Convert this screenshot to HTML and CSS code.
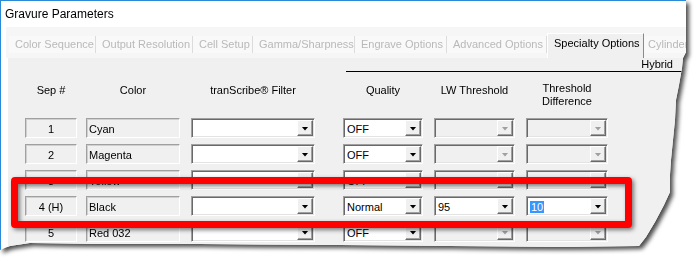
FILE: index.html
```html
<!DOCTYPE html>
<html lang="en">
<head>
    <meta charset="UTF-8">
    <title>Gravure Parameters</title>
    <link rel="stylesheet" href="styles.css">
</head>
<body>
    <div class="shot">
        <div class="janela">
            <div class="titulo">Gravure Parameters</div>
            <div class="abas">
                <div class="aba a1">Color Sequence</div>
                <div class="aba a2">Output Resolution</div>
                <div class="aba a3">Cell Setup</div>
                <div class="aba a4">Gamma/Sharpness</div>
                <div class="aba a5">Engrave Options</div>
                <div class="aba a6">Advanced Options</div>
                <div class="aba ativa">Specialty Options</div>
                <div class="aba ultima">Cylinder</div>
            </div>
            <div class="painel">
                <div class="hybrid">Hybrid</div>
                <div class="linha"></div>
                <div class="tabela">
                    <div class="fila cabeca">
                        <div class="c-sep um">Sep #</div>
                        <div class="c-cor um">Color</div>
                        <div class="c-filtro um">tranScribe® Filter</div>
                        <div class="c-q um">Quality</div>
                        <div class="c-lw um">LW Threshold</div>
                        <div class="c-dif">Threshold<br>Difference</div>
                    </div>

                    <div class="fila">
                        <div class="c-sep caixa centro">1</div>
                        <div class="c-cor caixa">Cyan</div>
                        <div class="c-filtro combo"><span class="valor"></span><span class="botao"><i></i></span></div>
                        <div class="c-q combo"><span class="valor">OFF</span><span class="botao"><i></i></span></div>
                        <div class="c-lw combo off"><span class="valor"></span><span class="botao"><i></i></span></div>
                        <div class="c-dif combo off"><span class="valor"></span><span class="botao"><i></i></span></div>
                    </div>
                    <div class="fila">
                        <div class="c-sep caixa centro">2</div>
                        <div class="c-cor caixa">Magenta</div>
                        <div class="c-filtro combo"><span class="valor"></span><span class="botao"><i></i></span></div>
                        <div class="c-q combo"><span class="valor">OFF</span><span class="botao"><i></i></span></div>
                        <div class="c-lw combo off"><span class="valor"></span><span class="botao"><i></i></span></div>
                        <div class="c-dif combo off"><span class="valor"></span><span class="botao"><i></i></span></div>
                    </div>
                    <div class="fila">
                        <div class="c-sep caixa centro">3</div>
                        <div class="c-cor caixa">Yellow</div>
                        <div class="c-filtro combo"><span class="valor"></span><span class="botao"><i></i></span></div>
                        <div class="c-q combo"><span class="valor">OFF</span><span class="botao"><i></i></span></div>
                        <div class="c-lw combo off"><span class="valor"></span><span class="botao"><i></i></span></div>
                        <div class="c-dif combo off"><span class="valor"></span><span class="botao"><i></i></span></div>
                    </div>
                    <div class="fila">
                        <div class="c-sep caixa centro">4 (H)</div>
                        <div class="c-cor caixa">Black</div>
                        <div class="c-filtro combo"><span class="valor"></span><span class="botao"><i></i></span></div>
                        <div class="c-q combo"><span class="valor">Normal</span><span class="botao"><i></i></span></div>
                        <div class="c-lw combo"><span class="valor">95</span><span class="botao"><i></i></span></div>
                        <div class="c-dif combo"><span class="valor"><b class="sel">10</b></span><span class="botao"><i></i></span></div>
                    </div>
                    <div class="fila">
                        <div class="c-sep caixa centro">5</div>
                        <div class="c-cor caixa">Red 032</div>
                        <div class="c-filtro combo"><span class="valor"></span><span class="botao"><i></i></span></div>
                        <div class="c-q combo"><span class="valor">OFF</span><span class="botao"><i></i></span></div>
                        <div class="c-lw combo off"><span class="valor"></span><span class="botao"><i></i></span></div>
                        <div class="c-dif combo off"><span class="valor"></span><span class="botao"><i></i></span></div>
                    </div>
                </div>
            </div>
        </div>
    </div>
    <div class="destaque"></div>
</body>
</html>
```

FILE: styles.css
```css
body {
    margin: 0;
    background-color: #fff;
    font-family: "Liberation Sans", Arial, sans-serif;
    font-size: 11px;
    color: #000;
}
.shot {
    width: 694px;
    height: 263px;
    filter: drop-shadow(3px 3px 2px rgba(0, 0, 0, 0.7));
}
.janela {
    width: 694px;
    height: 254px;
    box-sizing: border-box;
    background-color: #fff;
    border-top: 1px solid #2b8ad8;
    border-left: 1px solid #2b8ad8;
    clip-path: polygon(0 0, 686px 0, 686px 52px, 683px 58px, 682px 68px, 679px 85px, 676px 100px, 675px 120px, 673px 140px, 671px 160px, 670px 175px, 670px 192px, 664px 205px, 655px 222px, 646px 237px, 639px 246px, 560px 247px, 450px 246px, 340px 245px, 200px 244px, 100px 244px, 30px 243px, 10px 246px, 0 250px);
}
.titulo {
    height: 26px;
    line-height: 26px;
    padding-left: 4px;
    font-size: 12px;
}
.abas {
    display: flex;
    align-items: flex-end;
    height: 31px;
    margin-left: 5px;
    padding-left: 3px;
    background-color: #f6f6f6;
}
.aba {
    height: 17px;
    line-height: 17px;
    margin-bottom: 5px;
    padding-left: 6px;
    box-sizing: border-box;
    border-right: 1px solid #dcdcdc;
    background-color: #f9f9f9;
    color: #b9b9b9;
    white-space: nowrap;
    overflow: hidden;
}
.a1 { width: 87px; }
.a2 { width: 97px; }
.a3 { width: 60px; }
.a4 { width: 102px; }
.a5 { width: 92px; }
.a6 { width: 100px; }
.aba.ativa {
    width: 97px;
    height: 25px;
    margin-bottom: 0;
    padding-left: 6px;
    padding-top: 1px;
    background-color: #f0f0f0;
    border-top: 1px solid #fff;
    border-left: 1px solid #fff;
    border-right: 1px solid #8a8a8a;
    color: #000;
}
.aba.ultima {
    flex: 1;
    border-right: none;
    padding-left: 4px;
}
.painel {
    margin-left: 7px;
    height: 200px;
    background-color: #f0f0f0;
}
.hybrid {
    height: 12px;
    line-height: 12px;
    text-align: right;
    padding-right: 21px;
}
.linha {
    height: 1px;
    margin-top: 1px;
    margin-left: 338px;
    background-color: #000;
}
.tabela {
    padding-left: 17px;
    margin-top: 10px;
}
.fila {
    display: flex;
    height: 20px;
    margin-top: 6px;
}
.fila.cabeca {
    height: 36px;
    margin-top: 0;
    align-items: flex-start;
    line-height: 13px;
    text-align: center;
}
.cabeca .um {
    padding-top: 2px;
}
.c-sep { width: 52px; }
.c-cor { width: 94px; margin-left: 9px; }
.c-filtro { width: 124px; margin-left: 11px; }
.c-q { width: 80px; margin-left: 28px; }
.c-lw { width: 81px; margin-left: 11px; }
.c-dif { width: 82px; margin-left: 11px; }
.fila.cabeca + .fila {
    margin-top: 0;
}
.caixa {
    box-sizing: border-box;
    height: 20px;
    padding-left: 2px;
    padding-top: 1px;
    line-height: 18px;
    border: 1px solid;
    border-color: #a0a0a0 #fff #fff #a0a0a0;
    box-shadow: 1px 1px 0 #d0d0d0 inset;
    white-space: nowrap;
    overflow: hidden;
}
.caixa.centro {
    padding-left: 0;
    text-align: center;
}
.combo {
    position: relative;
    box-sizing: border-box;
    height: 20px;
    border: 1px solid;
    border-color: #a0a0a0 #fff #fff #a0a0a0;
    box-shadow: 1px 1px 0 #696969 inset, -1px -1px 0 #e3e3e3 inset;
    background-color: #fff;
}
.combo .valor {
    display: block;
    padding: 2px 0 0 3px;
    line-height: 16px;
}
.combo .sel {
    font-weight: normal;
    background-color: #3399ff;
    color: #fff;
    padding: 0 1px;
}
.botao {
    position: absolute;
    top: 1px;
    right: 1px;
    width: 16px;
    height: 16px;
    box-sizing: border-box;
    background-color: #f0f0f0;
    border: 1px solid;
    border-color: #fff #696969 #696969 #fff;
    box-shadow: -1px -1px 0 #a0a0a0 inset;
    display: flex;
    align-items: center;
    justify-content: center;
}
.botao i {
    display: block;
    width: 7px;
    height: 4px;
    margin-top: 1px;
    background-color: #000;
    clip-path: polygon(0 0, 100% 0, 50% 100%);
}
.combo.off {
    background-color: #f0f0f0;
}
.combo.off .botao i {
    background-color: #a0a0a0;
}
.destaque {
    position: absolute;
    left: 11px;
    top: 177px;
    width: 621px;
    height: 51px;
    box-sizing: border-box;
    border: 7px solid #ff0000;
    border-radius: 4px;
    filter: drop-shadow(2px 2px 2px rgba(0, 0, 0, 0.5));
}
```
